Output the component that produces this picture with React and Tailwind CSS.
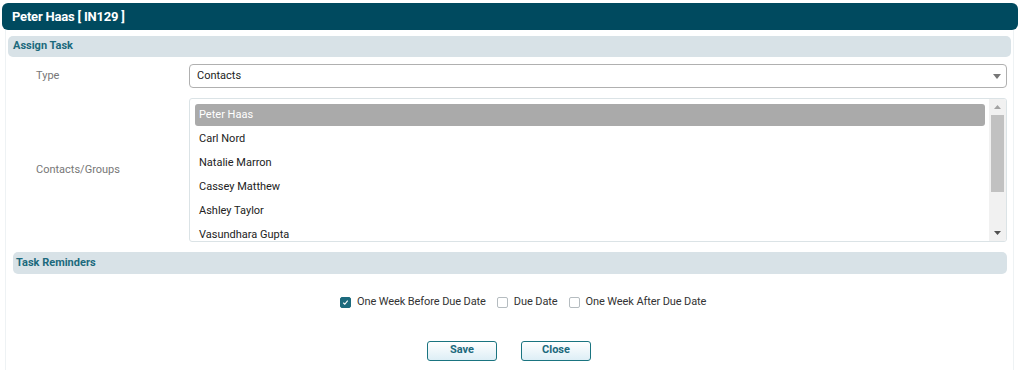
import { useState } from "react";

const contacts = [
  "Peter Haas",
  "Carl Nord",
  "Natalie Marron",
  "Cassey Matthew",
  "Ashley Taylor",
  "Vasundhara Gupta",
];

function Checkbox({ checked, label, onToggle }) {
  return (
    <label className="flex items-center gap-[6px] cursor-pointer" onClick={onToggle}>
      <span
        className={`w-[11px] h-[11px] rounded-[2px] flex items-center justify-center ${
          checked ? "bg-[#1c6a7d] border border-[#1c6a7d]" : "bg-white border border-[#b5bcc0]"
        }`}
      >
        {checked && (
          <svg width="7" height="7" viewBox="0 0 8 8">
            <path d="M1.5 4.3 L3.2 6 L6.5 1.8" fill="none" stroke="#fff" strokeWidth="1.3" />
          </svg>
        )}
      </span>
      <span className="text-[11px] tracking-[-0.1px] text-[#333]">{label}</span>
    </label>
  );
}

export default function App() {
  const [selected, setSelected] = useState(0);
  const [reminders, setReminders] = useState({ before: true, due: false, after: false });

  const toggle = (key) => setReminders((prev) => ({ ...prev, [key]: !prev[key] }));

  return (
    <div className="w-[1020px] h-[370px] bg-white overflow-hidden font-['Roboto',sans-serif]">
      {/* title bar */}
      <div className="mx-[2px] mt-[3px] h-[27px] rounded-[6px] bg-[#004a5f] flex items-center pl-[10px]">
        <span className="text-white font-bold text-[13px] tracking-[-0.2px]">Peter Haas [ IN129 ]</span>
      </div>

      <div className="mx-[5px] w-[1009px] h-[340px] border-x border-[#eef2f4] pt-[6px]">
        {/* assign task */}
        <div className="ml-[2px] mr-[2px] h-[21px] rounded-[5px] bg-[#d8e2e7] flex items-center pl-[5px]">
          <span className="text-[#1c6a7d] font-bold text-[11px]">Assign Task</span>
        </div>

        <div className="flex items-center mt-[7px] h-[24px]">
          <span className="w-[183px] pl-[30px] text-[11px] text-[#777]">Type</span>
          <div className="w-[818px] h-[24px] border border-[#b0b0b0] rounded-[4px] flex items-center justify-between pl-[7px] pr-[5px]">
            <span className="text-[11px] text-[#222]">Contacts</span>
            <svg width="8" height="5" viewBox="0 0 8 5">
              <path d="M0 0 H8 L4 5 Z" fill="#777" />
            </svg>
          </div>
        </div>

        <div className="flex items-center mt-[10px]">
          <span className="w-[183px] pl-[30px] text-[11px] text-[#777]">Contacts/Groups</span>
          <div className="w-[818px] h-[144px] border border-[#dbe3e6] rounded-[3px] flex overflow-hidden">
            <div className="flex-1 pl-[5px] pr-[4px] pt-[5px]">
              {contacts.map((name, i) => (
                <div
                  key={name}
                  onClick={() => setSelected(i)}
                  className={`h-[22px] mb-[2px] rounded-[3px] flex items-center pl-[4px] pt-[1px] text-[11px] cursor-pointer ${
                    selected === i ? "bg-[#aaaaaa] text-white" : "text-[#222]"
                  }`}
                >
                  {name}
                </div>
              ))}
            </div>
            <div className="w-[17px] bg-[#f1f1f1] flex flex-col items-center">
              <div className="h-[16px] flex items-center justify-center">
                <svg width="7" height="4" viewBox="0 0 7 4">
                  <path d="M0 4 H7 L3.5 0 Z" fill="#a3a3a3" />
                </svg>
              </div>
              <div className="w-[13px] h-[77px] bg-[#c1c1c1]" />
              <div className="flex-1" />
              <div className="h-[16px] flex items-center justify-center">
                <svg width="7" height="4" viewBox="0 0 7 4">
                  <path d="M0 0 H7 L3.5 4 Z" fill="#505050" />
                </svg>
              </div>
            </div>
          </div>
        </div>

        {/* task reminders */}
        <div className="ml-[7px] mr-[6px] mt-[10px] h-[22px] rounded-[5px] bg-[#d8e2e7] flex items-center pl-[3px]">
          <span className="text-[#1c6a7d] font-bold text-[11px]">Task Reminders</span>
        </div>

        <div className="flex items-center gap-[11px] mt-[20px] pl-[334px]">
          <Checkbox checked={reminders.before} label="One Week Before Due Date" onToggle={() => toggle("before")} />
          <Checkbox checked={reminders.due} label="Due Date" onToggle={() => toggle("due")} />
          <Checkbox checked={reminders.after} label="One Week After Due Date" onToggle={() => toggle("after")} />
        </div>

        <div className="flex items-center gap-[24px] mt-[30px] pl-[421px]">
          <button className="w-[70px] h-[20px] rounded-[3px] border border-[#1a7480] bg-gradient-to-b from-white to-[#ddeef6] text-[#1c6a7d] font-bold text-[11px]">
            Save
          </button>
          <button className="w-[70px] h-[20px] rounded-[3px] border border-[#1a7480] bg-gradient-to-b from-white to-[#ddeef6] text-[#1c6a7d] font-bold text-[11px]">
            Close
          </button>
        </div>
      </div>
    </div>
  );
}
